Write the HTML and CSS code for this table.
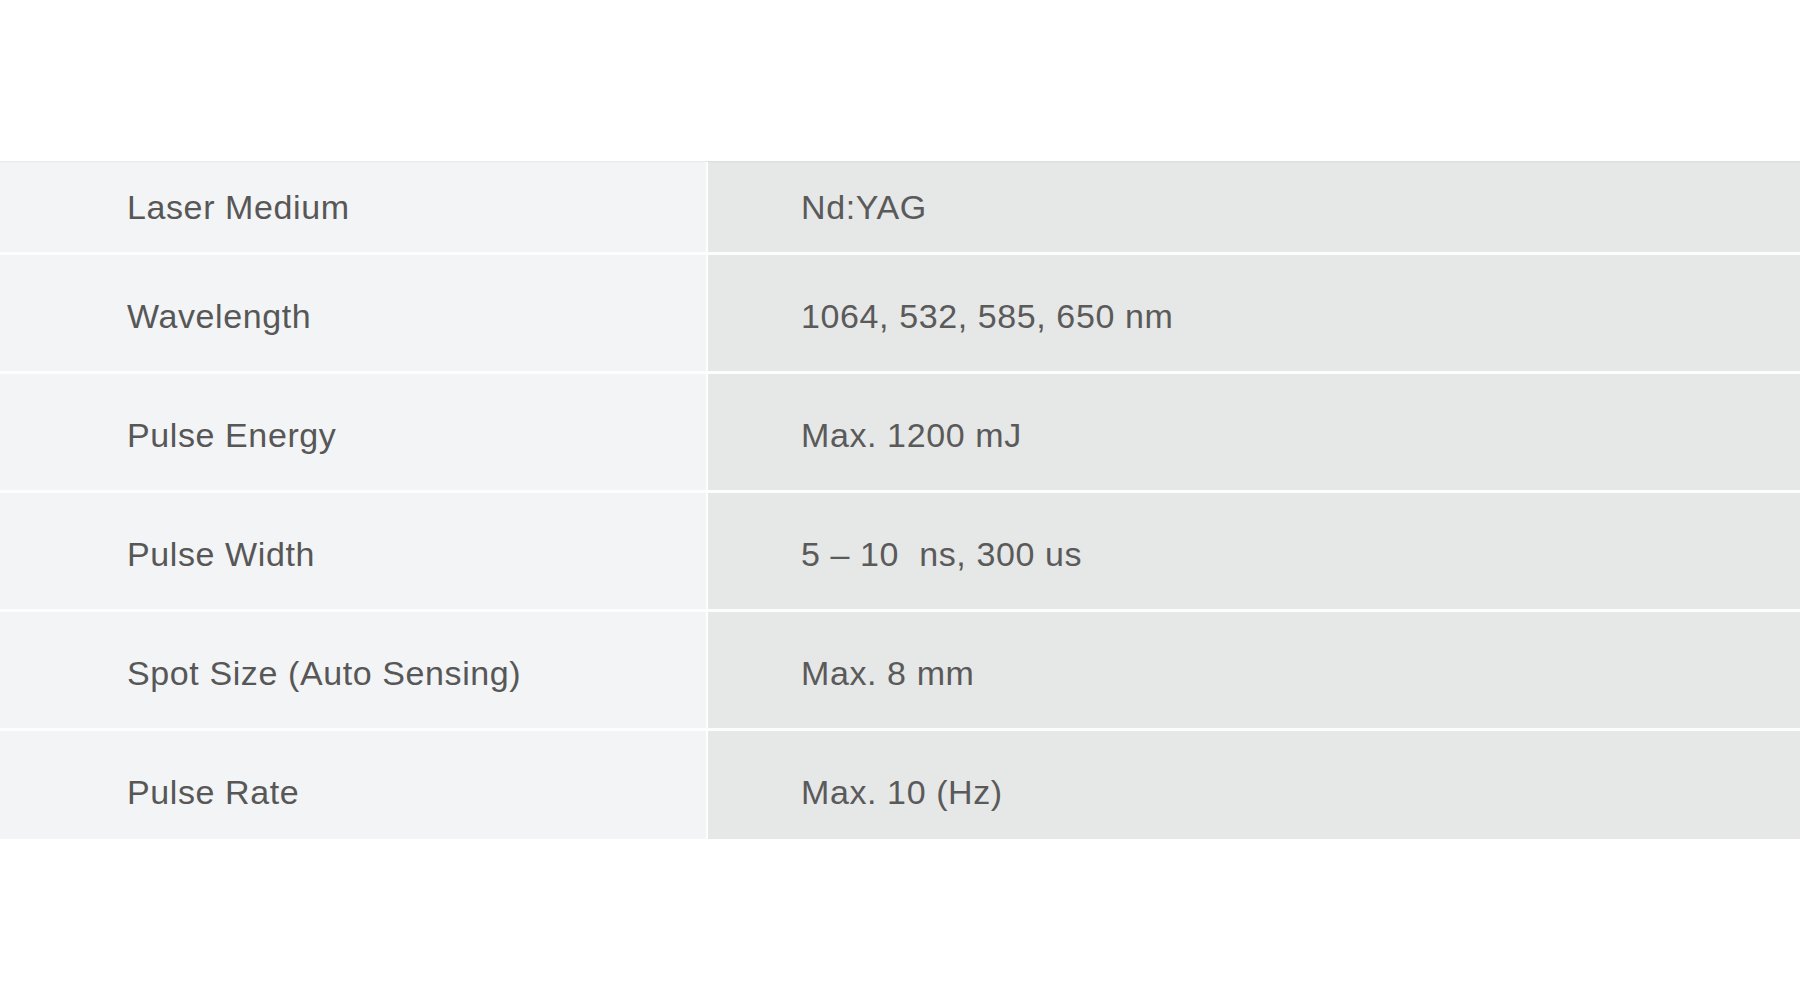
FILE: index.html
```html
<!DOCTYPE html>
<html lang="en">
<head>
<meta charset="utf-8">
<title>Specifications</title>
<link rel="stylesheet" href="styles.css">
</head>
<body>
<main class="page">
  <section class="spec-table">
    <div class="spec-row spec-row--first">
      <div class="spec-label">Laser Medium</div>
      <div class="spec-value">Nd:YAG</div>
    </div>
    <div class="spec-row">
      <div class="spec-label">Wavelength</div>
      <div class="spec-value">1064, 532, 585, 650 nm</div>
    </div>
    <div class="spec-row">
      <div class="spec-label">Pulse Energy</div>
      <div class="spec-value">Max. 1200 mJ</div>
    </div>
    <div class="spec-row">
      <div class="spec-label">Pulse Width</div>
      <div class="spec-value">5 – 10&nbsp; ns, 300 us</div>
    </div>
    <div class="spec-row">
      <div class="spec-label">Spot Size (Auto Sensing)</div>
      <div class="spec-value">Max. 8 mm</div>
    </div>
    <div class="spec-row spec-row--last">
      <div class="spec-label">Pulse Rate</div>
      <div class="spec-value">Max. 10 (Hz)</div>
    </div>
  </section>
</main>
</body>
</html>
```

FILE: styles.css
```css
html, body {
  margin: 0;
  padding: 0;
  background: #ffffff;
}

.page {
  padding-top: 161px;
  font-family: "Liberation Sans", Arial, Helvetica, sans-serif;
}

.spec-table {
  display: flex;
  flex-direction: column;
  gap: 3px;
  background: #fdfdfd;
  box-shadow: inset 0 1px 0 #dfe0e1;
}

.spec-row {
  display: grid;
  grid-template-columns: 706px 1fr;
  column-gap: 2px;
  height: 116px;
  box-sizing: border-box;
}

.spec-label,
.spec-value {
  display: flex;
  align-items: center;
  box-sizing: border-box;
  padding-top: 6px;
  font-size: 34px;
  letter-spacing: 0.6px;
  color: #575757;
  white-space: nowrap;
}

.spec-label {
  background: #f3f4f6;
  padding-left: 127px;
}

.spec-value {
  background: #e6e7e7;
  padding-left: 93px;
  color: #5a5a5a;
}

.spec-row--first {
  height: 91px;
}

.spec-row--first .spec-label,
.spec-row--first .spec-value {
  padding-top: 1px;
  box-shadow: inset 0 2px 2px -1px rgba(0, 0, 0, 0.05);
}

.spec-row--last {
  height: 108px;
}

.spec-row--last .spec-label,
.spec-row--last .spec-value {
  padding-top: 15px;
}
```
